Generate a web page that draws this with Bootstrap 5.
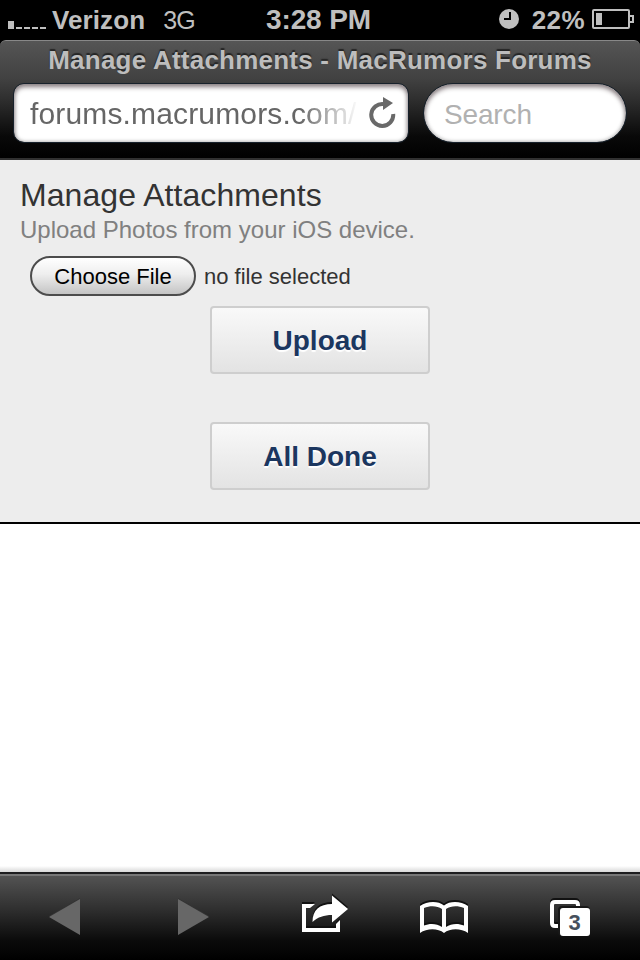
<!DOCTYPE html>
<html lang="en">
<head>
<meta charset="utf-8">
<meta name="viewport" content="width=device-width, initial-scale=1">
<title>Manage Attachments - MacRumors Forums</title>
<link href="https://cdn.jsdelivr.net/npm/bootstrap@5.3.0/dist/css/bootstrap.min.css" rel="stylesheet">
<style>
body{font-family:"Liberation Sans",Arial,sans-serif;background:#000;width:640px;height:960px;overflow:hidden;line-height:1}
svg{display:block;flex:none}
.status{height:40px;color:#bfbfbf;font-size:28px;font-weight:700;padding:0 6px 0 8px}
.status>div{flex:1 1 0}
.status span{white-space:nowrap;line-height:40px}
.carrier{margin-left:5px;font-size:26px;letter-spacing:.1px}
.net{margin-left:18px;font-size:25px;font-weight:400;letter-spacing:-.8px}
.clock{letter-spacing:-.1px;margin-right:5px}
.pct{margin:0 7px 0 13px;font-size:26px;letter-spacing:.4px}
.browser{height:120px;background:linear-gradient(#555 0,#414141 38px,#2b2b2b 62px,#090909 95px,#000 118px);border-radius:6px 6px 0 0;border-top:1px solid #888;border-bottom:2px solid #303030}
.page-name{height:42px;line-height:39px;font-size:26px;font-weight:700;color:#bdbdbd;text-shadow:0 -2px 1px #252525;letter-spacing:.23px;white-space:nowrap}
.field{height:60px;background:#fff;border:1px solid #17212b;box-shadow:inset 0 3px 5px #8b8184,inset 0 0 4px #aaa;background-clip:padding-box;font-size:30px}
.address{width:396px;border-radius:11px;padding:0 11px 0 16px;color:#666}
.address span{width:330px;overflow:hidden;white-space:nowrap;line-height:40px;padding-top:2px;letter-spacing:.15px;-webkit-mask-image:linear-gradient(90deg,#000 270px,transparent 329px);mask-image:linear-gradient(90deg,#000 270px,transparent 329px)}
.fields{gap:14px}
.search{width:204px;border-radius:30px;color:#b1b1b1;padding:3px 0 0 20px;font-size:28px;letter-spacing:-.15px}
.content-area{height:364px;background:#ededed;border-bottom:2px solid #000;padding:16px 20px 0}
h1{font-size:32px;line-height:38px;color:#333;font-weight:400;margin:0;letter-spacing:.06px}
.sub{font-size:24px;line-height:32px;height:30px;color:#808080}
.file-row{margin:12px 0 10px 10px;height:40px;font-size:22px;color:#333}
.file-row span{padding-top:2px}
.choose{width:166px;height:40px;border:2px solid #4c4c4c;border-radius:20px;background:linear-gradient(#fff,#eee 45%,#c4c4c4);color:#000;padding:1px 0 0;font-size:22px;line-height:35px}
.action{width:220px;height:68px;border:2px solid #cecece;border-radius:4px;background:linear-gradient(#f9f9f9,#e3e3e3);color:#1b365f;font-size:28px;font-weight:700;text-shadow:0 2px 1px #fff;padding:1px 0 0;line-height:63px}
.blank{height:348px;background:linear-gradient(#fff 342px,#d8d8d8)}
.tools{height:88px;background:linear-gradient(#555,#303030 40%,#0b0b0b 77%,#000);border-top:2px solid #1d1d1f;box-shadow:inset 0 2px #777}
.glyphs{filter:drop-shadow(0 -2px 0 #111)}
.arrows{filter:drop-shadow(0 -1px 0 #333)}
</style>
</head>
<body class="d-flex flex-column m-0">
<div class="status d-flex align-items-center">
  <div class="d-flex align-items-center">
    <svg width="39" height="40" fill="#bfbfbf"><path d="M0 21h6v8H0zM8 27h6v2H8zM16 27h6v2h-6zM24 27h6v2h-6zM32 27h6v2h-6z"/></svg>
    <span class="carrier">Verizon</span><span class="net">3G</span>
  </div>
  <span class="clock">3:28 PM</span>
  <div class="d-flex align-items-center justify-content-end">
    <svg width="20" height="40"><circle cx="10" cy="19" r="10" fill="#bfbfbf"/><path d="M11 12v7H5" fill="none" stroke="#000" stroke-width="2"/></svg>
    <span class="pct">22%</span>
    <svg width="42" height="40"><rect x="1" y="10" width="36" height="18" rx="1" fill="none" stroke="#bfbfbf" stroke-width="2"/><path d="M4 13h6v12H4z" fill="#bfbfbf"/><path d="M38 16h3v6h-3" fill="none" stroke="#bfbfbf" stroke-width="2"/></svg>
  </div>
</div>
<header class="browser">
  <div class="page-name text-center">Manage Attachments - MacRumors Forums</div>
  <div class="fields d-flex justify-content-center">
    <div class="field address d-flex align-items-center justify-content-between">
      <span>forums.macrumors.com/</span>
      <svg width="28" height="34" viewBox="0 0 28 34"><path d="M24.2 18A11 11 0 1 1 15 8.1" fill="none" stroke="#696969" stroke-width="4"/><path d="M14 1l10 6-10 7z" fill="#696969"/></svg>
    </div>
    <div class="field search d-flex align-items-center">Search</div>
  </div>
</header>
<main class="content-area">
  <h1>Manage Attachments</h1>
  <div class="sub">Upload Photos from your iOS device.</div>
  <div class="file-row d-flex align-items-center gap-2"><button class="btn choose">Choose File</button><span>no file selected</span></div>
  <div class="d-flex flex-column align-items-center gap-5"><button class="btn action">Upload</button><button class="btn action">All Done</button></div>
</main>
<div class="blank"></div>
<nav class="tools">
  <svg width="640" height="86" viewBox="0 874 640 86">
    <path class="arrows" d="M49 917l31-18v36zM209 917l-31-18v36z" fill="#676767"/>
    <g class="glyphs">
      <path d="M302 904h13l-5 4h-4v20h30v-4l4-4v12h-38z" fill="#fff"/>
      <path d="M332 895.500l16 13.500-16 13.500v-7.500c-8 0-14 2-19.500 7 0-12 7-18 19.500-18z" fill="#fff"/>
      <path fill-rule="evenodd" fill="#fff" d="M420 933V906C427 901 438 900.500 444 905.500C450 900.500 461 901 468 906V933C461 928 450 928 444 933C438 928 427 928 420 933ZM424 908V925.500C430 923 437 923.500 442 927V909C437 905.500 430 905.500 424 908ZM464 908V925.500C458 923 451 923.500 446 927V909C451 905.500 458 905.500 464 908Z"/>
      <path d="M558 926h-3q-3 0-3-3v-18q0-3 3-3h20q3 0 3 3v3" fill="none" stroke="#fff" stroke-width="4"/>
    </g>
    <rect x="558" y="906" width="32" height="30" rx="4" fill="#181818"/>
    <rect x="560" y="908" width="30" height="28" rx="3" fill="#fff"/>
    <text x="574.500" y="930" text-anchor="middle" font-size="22" font-weight="700" fill="#46505c">3</text>
  </svg>
</nav>
<script src="https://cdn.jsdelivr.net/npm/bootstrap@5.3.0/dist/js/bootstrap.bundle.min.js"></script>
</body>
</html>
